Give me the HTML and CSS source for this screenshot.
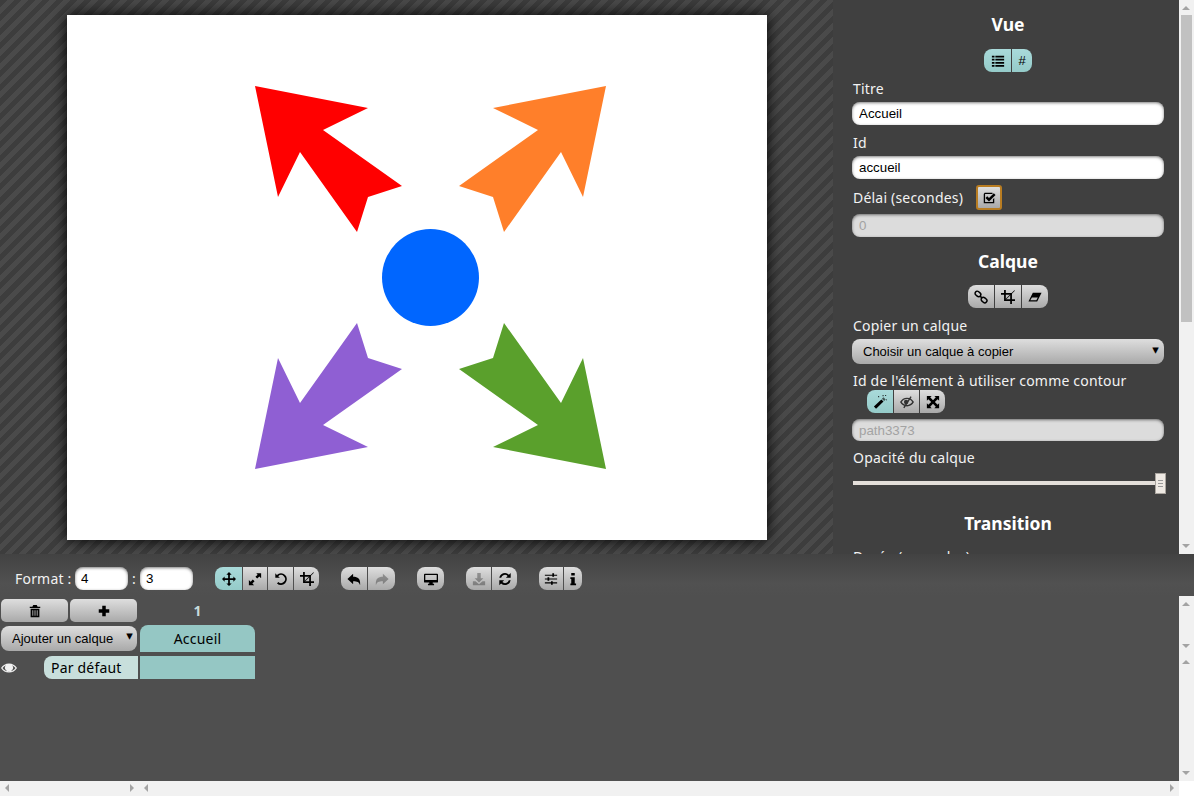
FILE: index.html
```html
<!DOCTYPE html>
<html lang="fr">
  <head>
    <meta charset="UTF-8" />
    <title>Editeur de vues</title>
    <link rel="stylesheet" href="styles.css">
  </head>
  <body>
    <svg class="defs" width="0" height="0">
      <symbol id="i-crop" viewBox="0 0 16 16"><path d="M3.500 0h2v10.500H16v2H3.500zM0 3.500h12.500V16h-2V5.500H0z"/><path d="M15.300.3l.6.6L6 10.700l-.6-.6z"/></symbol>
      <symbol id="i-list" viewBox="0 0 16 16"><path d="M1 2h3v2H1zM5 2h10v2H5zM1 5.500h3v2H1zM5 5.500h10v2H5zM1 9h3v2H1zM5 9h10v2H5zM1 12.500h3v2H1zM5 12.500h10v2H5z"/></symbol>
    </svg>

    <div class="top">
      <div class="stage">
        <svg class="slide" width="700" height="525" viewBox="67 15 700 525">
          <polygon fill="#ff0000" points="255,86 368,108 323,130 402,186 368,197 357,232 300,152 278,197" />
          <polygon fill="#ff7f2a" points="606,86 493,108 538,130 459,186 493,197 504,232 561,152 583,197" />
          <polygon fill="#8f5fd3" points="255,469 368,447 323,425 402,369 368,358 357,323 300,403 278,358" />
          <polygon fill="#5aa02c" points="606,469 493,447 538,425 459,369 493,358 504,323 561,403 583,358" />
          <circle fill="#0066ff" cx="430.500" cy="277.500" r="48.500" />
        </svg>
      </div>

      <div class="panel">
        <div class="panel-inner">
          <h2>Vue</h2>
          <div class="group-row">
            <div class="group">
              <button class="btn on w27"><svg class="ico"><use href="#i-list" /></svg></button>
              <button class="btn on w20 hash">#</button>
            </div>
          </div>
          <label class="lbl">Titre</label>
          <input class="field" type="text" value="Accueil" />
          <label class="lbl">Id</label>
          <input class="field" type="text" value="accueil" />
          <div class="delay-row">
            <label class="lbl-inline">Délai (secondes)</label>
            <button class="btn focus">
              <svg class="ico" viewBox="0 0 16 16"><path d="M3 2h9v1.500H3.500v9h9V9.500L14 8v6H2V3.500zM13.500 2.500l2 2L8 12 4 8l2-2 2 2z"/></svg>
            </button>
          </div>
          <input class="field off" type="text" value="0" disabled />

          <h2 class="h-calque">Calque</h2>
          <div class="group-row">
            <div class="group">
              <button class="btn w26">
                <svg class="ico" viewBox="0 0 16 16"><g fill="none" stroke="#000" stroke-width="1.700"><rect x="1" y="2" width="7" height="5" rx="2.500" transform="rotate(40 4.500 4.500)"/><rect x="8" y="9" width="7" height="5" rx="2.500" transform="rotate(40 11.500 11.500)"/><path d="M7 7l2 2"/></g></svg>
              </button>
              <button class="btn w26"><svg class="ico"><use href="#i-crop" /></svg></button>
              <button class="btn w26">
                <svg class="ico" viewBox="0 0 16 16"><path fill-rule="evenodd" d="M5.500 3H15.500L10.500 13H.5zM4.500 8.500L2.600 11.800H9.500L11.200 8.500z"/></svg>
              </button>
            </div>
          </div>
          <label class="lbl lbl-copy">Copier un calque</label>
          <div class="pick pick-wide">
            <select class="sel"><option>Choisir un calque à copier</option></select>
          </div>
          <label class="lbl">Id de l'élément à utiliser comme contour</label>
          <div class="group group-outline">
            <button class="btn on w26">
              <svg class="ico" viewBox="0 0 16 16"><path d="M1 13.200L9.500 5 12 7.500 3.500 15.700z"/><path d="M10.200 4.300L12 2.500l2.500 2.500-1.800 1.800z" opacity=".6"/><path d="M11 0h1v1.500h-1zM15 5h1v1h-1zM6 1h1v1.500H6zM14 0h1v1h-1z"/></svg>
            </button>
            <button class="btn w25">
              <svg class="ico soft" viewBox="0 0 16 16"><path d="M0 8c2-3.500 4.500-5 8-5 3.500 0 6 1.500 8 5-2 3.500-4.500 5-8 5-3.500 0-6-1.500-8-5zm2 0c1.500 2 3 3.300 6 3.300S12.500 10 14 8c-1.500-2-3-3.300-6-3.300S3.500 6 2 8z" fill-rule="evenodd"/><circle cx="7" cy="8" r="2.500"/><path d="M12 1.500l1.300.8L5 15l-1.300-.8z"/></svg>
            </button>
            <button class="btn w25">
              <svg class="ico" viewBox="0 0 16 16"><path d="M1 1h5.500L4.800 2.700 8 5.900l3.200-3.200L9.500 1H15v5.500l-1.700-1.700L10.100 8l3.200 3.200 1.700-1.700V15H9.500l1.700-1.700L8 10.100l-3.200 3.200L6.500 15H1V9.500l1.700 1.700L5.900 8 2.700 4.800 1 6.500z"/></svg>
            </button>
          </div>
          <input class="field off field-outline" type="text" value="path3373" disabled />
          <label class="lbl">Opacité du calque</label>
          <div class="slider">
            <div class="track"></div>
            <div class="handle"><i></i><i></i><i></i></div>
          </div>

          <h2 class="h-transition">Transition</h2>
          <label class="lbl">Durée (secondes)</label>
        </div>
        <div class="vbar">
          <span class="arr up"></span>
          <span class="thumb"></span>
          <span class="arr down"></span>
        </div>
      </div>
    </div>

    <div class="bottom">
      <div class="toolbar">
        <span class="fmt-label">Format :</span>
        <input class="field fmt" type="text" value="4" />
        <span class="fmt-sep">:</span>
        <input class="field fmt" type="text" value="3" />

        <div class="group tool-gap">
          <button class="btn on w27">
            <svg class="ico" viewBox="0 0 16 16"><path d="M8 0l3 3H9v4h4V5l3 3-3 3V9H9v4h2l-3 3-3-3h2V9H3v2L0 8l3-3v2h4V3H5z"/></svg>
          </button>
          <button class="btn w24">
            <svg class="ico" viewBox="0 0 16 16"><path d="M9.500 1.500H15V7l-2-2-2.500 2.500-2-2L11 3zM1 9l2 2 2.500-2.500 2 2L5 13l2 2H1z"/></svg>
          </button>
          <button class="btn w25">
            <svg class="ico" viewBox="0 0 16 16"><path d="M1.500 1.500l1.800 1.800A6.700 6.700 0 1 1 3.400 13l1.500-1.500a4.600 4.600 0 1 0-.1-6.700L6.700 6.700H1.500z"/></svg>
          </button>
          <button class="btn w25"><svg class="ico"><use href="#i-crop" /></svg></button>
        </div>

        <div class="group tool-gap">
          <button class="btn w26">
            <svg class="ico" viewBox="0 0 16 16"><path d="M7 2v3.500c5.500 0 8.500 2 8 9.500-1.200-3.500-3-4.500-8-4.500V14L.5 8z"/></svg>
          </button>
          <button class="btn w27 dim">
            <svg class="ico" viewBox="0 0 16 16"><path d="M9 2v3.500c-5.500 0-8.500 2-8 9.500 1.200-3.500 3-4.500 8-4.500V14l6.500-6z"/></svg>
          </button>
        </div>

        <div class="group tool-gap">
          <button class="btn w27">
            <svg class="ico" viewBox="0 0 16 16"><path fill-rule="evenodd" d="M1 2h14a1 1 0 0 1 1 1v8a1 1 0 0 1-1 1H10v1.500h1.500V15h-7v-1.500H6V12H1a1 1 0 0 1-1-1V3a1 1 0 0 1 1-1zM1.500 3.500V9h13V3.500z"/></svg>
          </button>
        </div>

        <div class="group tool-gap">
          <button class="btn w25 dim">
            <svg class="ico" viewBox="0 0 16 16"><path d="M6 1h4v6h3l-5 5-5-5h3zM1 10.500h3L8 14l4-3.500h3V15H1z"/></svg>
          </button>
          <button class="btn w25">
            <svg class="ico" viewBox="0 0 16 16"><path d="M14.500 1v5.500H9l2-2A4.500 4.500 0 0 0 3.600 6.500H1.500A6.500 6.500 0 0 1 12.500 3zM1.500 15V9.500H7l-2 2a4.500 4.500 0 0 0 7.400-2h2.100A6.500 6.500 0 0 1 3.500 13z"/></svg>
          </button>
        </div>

        <div class="group tool-gap">
          <button class="btn w24">
            <svg class="ico" viewBox="0 0 16 16"><path d="M1 3h14v1.200H1zM1 7.400h14v1.200H1zM1 11.800h14V13H1z"/><path d="M9.500 1.500h2v4h-2zM4 6h2v4H4zM8 10.500h2v4H8z"/></svg>
          </button>
          <button class="btn w18">
            <svg class="ico" viewBox="0 0 16 16"><path d="M6 1h4v3H6zM5 6h5v7h1.500v2h-6.500v-2H6V8H5z"/></svg>
          </button>
        </div>
      </div>

      <div class="timeline">
        <div class="tl-tools">
          <div class="tool-row">
            <button class="btn grow">
              <svg class="ico" viewBox="0 0 16 16"><path d="M6 1h4l1 2h3v1.500H2V3h3zM3 5.500h10V15H3zM5 7v6.500h1V7zm2.500 0v6.500h1V7zM10 7v6.500h1V7z" fill-rule="evenodd"/></svg>
            </button>
            <button class="btn grow">
              <svg class="ico" viewBox="0 0 16 16"><path d="M6 2h4v4h4v4h-4v4H6v-4H2V6h4z"/></svg>
            </button>
          </div>
          <div class="pick pick-add">
            <select class="sel"><option>Ajouter un calque</option></select>
          </div>
        </div>

        <div class="tl-views">
          <div class="view-num">1</div>
          <div class="view-tab">Accueil</div>
        </div>

        <div class="vbar">
          <span class="arr up"></span>
          <span class="arr down"></span>
        </div>

        <div class="tl-layers">
          <svg class="eye" viewBox="0 0 16 16"><path d="M0 8c2-3 4.500-4.500 8-4.500S14 5 16 8c-2 3-4.500 4.500-8 4.500S2 11 0 8zm1.500 0C3 10 5 11.500 8 11.500S13 10 14.500 8c-1-1.300-2-2.200-3.300-2.800a4 4 0 1 1-6.400 0C3.500 5.800 2.500 6.700 1.500 8z" fill-rule="evenodd"/></svg>
          <div class="layer-name">Par défaut</div>
        </div>

        <div class="tl-cells">
          <div class="cell"></div>
        </div>

        <div class="vbar">
          <span class="arr up"></span>
          <span class="arr down"></span>
        </div>

        <div class="hbar">
          <span class="arr left"></span>
          <span class="arr right"></span>
        </div>
        <div class="hbar">
          <span class="arr left"></span>
          <span class="arr right"></span>
        </div>
        <div class="corner"></div>
      </div>
    </div>
  </body>
</html>
```

FILE: styles.css
```css
* {
  box-sizing: border-box;
}

html,
body {
  height: 100%;
}

body {
  margin: 0;
  overflow: hidden;
  background: #404040;
  color: #fff;
  font-family: "Noto Sans", "Open Sans", sans-serif;
  font-size: 14px;
  letter-spacing: 0.2px;
  display: flex;
  flex-direction: column;
}

.defs {
  position: absolute;
}

.top {
  display: flex;
  height: 554px;
}

.stage {
  width: 833px;
  overflow: hidden;
  padding: 15px 0 0 67px;
  background: repeating-linear-gradient(135deg, #3d3d3d 0, #3d3d3d 5px, #4a4a4a 5px, #4a4a4a 10px);
}

.slide {
  display: block;
  background: #fff;
  box-shadow: 0 0 15px #000;
}

.panel {
  flex: 1;
  display: flex;
  background: #404040;
  overflow: hidden;
}

.panel-inner {
  flex: 1;
  overflow: hidden;
  padding: 0 16px 0 20px;
}

/* drawn by hand, the browser hides its own */
.vbar {
  width: 15px;
  flex: none;
  display: flex;
  flex-direction: column;
  justify-content: space-between;
  background: #f1f1f1;
}

.panel > .vbar {
  justify-content: flex-start;
}

.panel > .vbar .down {
  margin-top: auto;
}

.thumb {
  height: 307px;
  margin: 0 2px;
  background: #c1c1c1;
}

.hbar {
  height: 15px;
  display: flex;
  justify-content: space-between;
  background: #f1f1f1;
}

.corner {
  background: #fff;
}

.arr {
  position: relative;
  flex: none;
  width: 15px;
  height: 15px;
}

.arr::before {
  content: "";
  position: absolute;
  border: 4px solid transparent;
}

.up::before {
  left: 3px;
  top: 6px;
  border-top: 0;
  border-bottom: 4px solid #a3a3a3;
}

.down::before {
  left: 3px;
  top: 5px;
  border-bottom: 0;
  border-top: 4px solid #a3a3a3;
}

.left::before {
  top: 3px;
  left: 5px;
  border-left: 0;
  border-right: 4px solid #a3a3a3;
}

.right::before {
  top: 3px;
  left: 6px;
  border-right: 0;
  border-left: 4px solid #a3a3a3;
}

h2 {
  margin: 0;
  padding-top: 12px;
  height: 49px;
  text-align: center;
  font-size: 17.5px;
  letter-spacing: 0;
  line-height: 25px;
  font-weight: 700;
}

.h-calque {
  height: 40px;
  padding-top: 4px;
}

.h-transition {
  height: 48px;
  margin-top: 5px;
}

.group-row {
  display: flex;
  justify-content: center;
  margin-bottom: 7px;
}

.group {
  display: inline-flex;
  height: 23px;
  gap: 1px;
  border-radius: 8px;
  overflow: hidden;
}

.btn {
  height: 23px;
  padding: 0;
  border: 0;
  display: flex;
  align-items: center;
  justify-content: center;
  color: #000;
  background: linear-gradient(#dedede, #a9a9a9);
}

.btn.on {
  background: linear-gradient(#a9dada, #95cbc9);
}

.btn.dim .ico {
  opacity: 0.3;
}

.w18 { width: 18px; }
.w20 { width: 20px; }
.w24 { width: 24px; }
.w25 { width: 25px; }
.w26 { width: 26px; }
.w27 { width: 27px; }

.hash {
  font-family: "Liberation Sans", sans-serif;
  font-size: 13px;
}

.ico {
  width: 14px;
  height: 14px;
  fill: #000;
}

.ico.soft {
  opacity: 0.75;
}

.lbl,
.lbl-inline {
  display: block;
  height: 20px;
  line-height: 20px;
  color: #f2f2f2;
}

.lbl-inline {
  width: 123px;
  flex: none;
}

.field {
  display: block;
  width: 312px;
  height: 23px;
  margin: 3px 0 8px -1px;
  padding: 0 7px;
  border: 0;
  border-radius: 8px;
  background: #fff;
  color: #000;
  font-family: "Liberation Sans", sans-serif;
  font-size: 13.33px;
  box-shadow: inset 0 1px 3px rgba(0, 0, 0, 0.5);
}

.field.off {
  background: #dcdcdc;
  color: #a3a3a3;
  opacity: 1;
}

.delay-row {
  display: flex;
  align-items: center;
  height: 25px;
  margin-top: -2px;
  margin-bottom: 1px;
}

.delay-row + .field {
  margin-top: 4px;
}

.btn.focus {
  width: 26px;
  height: 25px;
  border: 2px solid #b97d22;
  border-radius: 3px;
}

.pick {
  position: relative;
}

.pick::after {
  content: "▾";
  position: absolute;
  top: 1px;
  right: 5px;
  color: #000;
  font-family: "DejaVu Sans", sans-serif;
  font-size: 13px;
  line-height: 20px;
  pointer-events: none;
}

.pick-wide {
  width: 312px;
  margin: 3px 0 7px -1px;
}

.sel {
  appearance: none;
  display: block;
  width: 100%;
  height: 25px;
  padding: 0 11px;
  border: 0;
  border-radius: 8px;
  color: #000;
  background: linear-gradient(#dedede, #a9a9a9);
  font-family: "Liberation Sans", sans-serif;
  font-size: 13px;
}

.lbl-copy {
  margin-top: 8px;
}

.group-outline {
  display: flex;
  width: 78px;
  margin: -1px 0 6px 14px;
}

.field-outline {
  height: 22px;
  margin-bottom: 7px;
}

.slider {
  position: relative;
  height: 21px;
  margin: 5px 0 0 0;
  width: 313px;
}

.track {
  position: absolute;
  top: 8px;
  left: 0;
  right: 5px;
  height: 4px;
  background: #e4dfda;
}

.handle {
  position: absolute;
  top: 0;
  right: 0;
  width: 11px;
  height: 21px;
  display: flex;
  flex-direction: column;
  align-items: center;
  justify-content: center;
  gap: 2px;
  background: #eee9e3;
  border: 1px solid #aaa59f;
}

.handle i {
  width: 5px;
  height: 1px;
  background: #999;
}

.bottom {
  flex: 1;
  display: flex;
  flex-direction: column;
  min-height: 0;
  background: #4f4f4f;
}

.toolbar {
  display: flex;
  align-items: center;
  height: 42px;
  padding: 7px 0 0 15px;
  background: linear-gradient(#424242, #515151 70%, #4f4f4f);
}

.fmt-label {
  width: 60px;
  color: #f2f2f2;
}

.fmt-sep {
  width: 12px;
  text-align: center;
  color: #f2f2f2;
}

.field.fmt {
  width: 53px;
  margin: 0;
  padding: 0 6px;
}

.tool-gap {
  margin-left: 22px;
}

.timeline {
  flex: 1;
  display: grid;
  grid-template-columns: 139px 1fr 15px;
  grid-template-rows: 58px 1fr 15px;
  min-height: 0;
}

.tl-tools {
  padding: 3px 2px 0 1px;
}

.tool-row {
  display: flex;
  gap: 2px;
  margin-bottom: 4px;
}

.tool-row .btn {
  border-radius: 5px;
}

.grow {
  flex: 1;
}

.pick-add::after {
  right: 4px;
  top: 0;
}

.tl-views {
  overflow: hidden;
  padding-left: 1px;
}

.view-num {
  width: 115px;
  height: 29px;
  line-height: 30px;
  text-align: center;
  font-weight: 700;
  color: #c6dcdc;
}

.view-tab {
  width: 115px;
  height: 27px;
  line-height: 27px;
  text-align: center;
  color: #000;
  background: #95c7c4;
  border-radius: 8px 8px 0 0;
}

.tl-layers {
  display: flex;
  align-items: center;
  align-self: start;
  height: 25px;
  padding-top: 2px;
}

.eye {
  width: 16px;
  height: 16px;
  margin: 0 27px 0 1px;
  fill: #f2f2f2;
}

.layer-name {
  width: 94px;
  height: 23px;
  line-height: 23px;
  padding-left: 7px;
  color: #000;
  background: #c8dfdc;
  border-radius: 8px 0 0 8px;
}

.tl-cells {
  padding: 2px 0 0 1px;
}

.cell {
  width: 115px;
  height: 23px;
  background: #95c7c4;
}
```
